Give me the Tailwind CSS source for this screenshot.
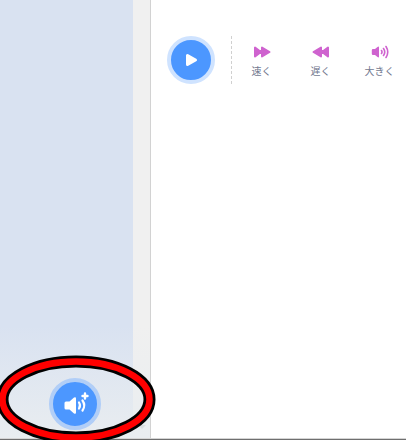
<!DOCTYPE html>
<html lang="ja">
<head>
    <meta charset="UTF-8">
    <meta name="viewport" content="width=device-width, initial-scale=1.0">
    <title>音声プレーヤー</title>
    <script src="https://cdn.jsdelivr.net/npm/@tailwindcss/browser@4"></script>
</head>
<body class="relative flex h-screen flex-col overflow-hidden bg-white font-['Liberation_Sans','Noto_Sans_CJK_JP',sans-serif]">
    <div class="flex min-h-0 flex-1 border-b border-[#d4d4d4]">
        <!-- Side panel -->
        <aside class="relative flex w-[151px] shrink-0 border-r border-[#d2d2d2]">
            <div class="flex-1 bg-[#d9e2f1]"></div>
            <div class="w-[17px] bg-[#f0f0f0]"></div>
            <div class="absolute inset-x-0 bottom-0 flex h-28 items-end justify-center bg-linear-to-b from-[#e9edf0]/0 to-[#e9edf0] pb-2">
                <button type="button" aria-label="音声を追加" class="flex size-[52px] items-center justify-center rounded-full border-4 border-[#b1cef7] bg-[#4c97ff]">
                    <svg class="size-11" viewBox="0 0 44 44" fill="none" stroke="#fff" stroke-width="2.200" stroke-linecap="round">
                        <path d="M13 19.500h3.500l4.500-4q2-1 2 1v14q0 2-2 1l-4.500-4H13q-1.500 0-1.500-1.500v-5q0-1.500 1.500-1.500z" fill="#fff" stroke="none" />
                        <path d="M26 20.500q2 3 0 6M29.500 18.500q3.500 5 0 10" />
                        <path d="M32 11.500v5M29.500 14h5" stroke-width="2.400" />
                    </svg>
                </button>
            </div>
            <svg class="absolute right-1 bottom-2 h-1.5 w-2" viewBox="0 0 8 6" fill="#d9dde0"><path d="M0 1h8L4 5z" /></svg>
        </aside>

        <!-- Playback controls -->
        <main class="flex min-w-0 flex-1 items-start pt-9 pl-4">
            <button type="button" aria-label="再生" class="flex size-12 shrink-0 items-center justify-center rounded-full border-4 border-[#cfe3ff] bg-[#4c97ff]">
                <svg class="size-4" viewBox="0 0 16 16" fill="#fff" stroke="#fff" stroke-width="3" stroke-linejoin="round"><path d="M4.500 3.500v9L12.500 8z" /></svg>
            </button>
            <svg class="ml-4 h-12 w-px shrink-0" viewBox="0 0 1 48"><path d="M.5 0v48" stroke="#d0d0d0" stroke-dasharray="3 2" /></svg>
            <div class="flex text-[10px] leading-4 text-[#737990]">
                <button type="button" class="flex w-[59px] flex-col items-center gap-1 pt-2">
                    <svg class="h-4 w-5" viewBox="0 0 20 16" fill="#cf63cf" stroke="#cf63cf" stroke-width="2" stroke-linejoin="round"><path d="M3 3.500v9L9 8zM10 3.500v9L17.500 8zM8 7h3v2H8z" /></svg>
                    速く
                </button>
                <button type="button" class="flex w-[59px] flex-col items-center gap-1 pt-2">
                    <svg class="h-4 w-5" viewBox="0 0 20 16" fill="#cf63cf" stroke="#cf63cf" stroke-width="2" stroke-linejoin="round"><path d="M17 3.500v9L11 8zM10 3.500v9L2.500 8zM9 7h3v2H9z" /></svg>
                    遅く
                </button>
                <button type="button" class="flex w-[59px] flex-col items-center gap-1 pt-2">
                    <svg class="h-4 w-5" viewBox="0 0 20 16" fill="none" stroke="#cf63cf" stroke-width="1.600" stroke-linecap="round">
                        <path d="M3 5h2l2.500-2q1.500-1 1.500.5v9q0 1.500-1.500.5L5 11H3q-1.200 0-1.200-1.200V6.200Q1.800 5 3 5z" fill="#cf63cf" stroke="none" />
                        <path d="M11.500 6.500q1 1.500 0 3M13.500 4.500q2.500 3.500 0 7M16 2.500q3.500 5.500 0 11" />
                    </svg>
                    大きく
                </button>
            </div>
        </main>
    </div>
    <div class="h-px shrink-0 bg-[#6f6f6f]"></div>

    <!-- Ring around the add button -->
    <svg class="pointer-events-none absolute bottom-0 left-0 h-[90px] w-40 overflow-visible" viewBox="0 0 160 90" fill="none">
        <ellipse cx="76" cy="49.500" rx="73.500" ry="38" stroke="#000" stroke-width="12" />
        <ellipse cx="76" cy="49.500" rx="73.500" ry="38" stroke="#f00" stroke-width="6.500" />
    </svg>
</body>
</html>
